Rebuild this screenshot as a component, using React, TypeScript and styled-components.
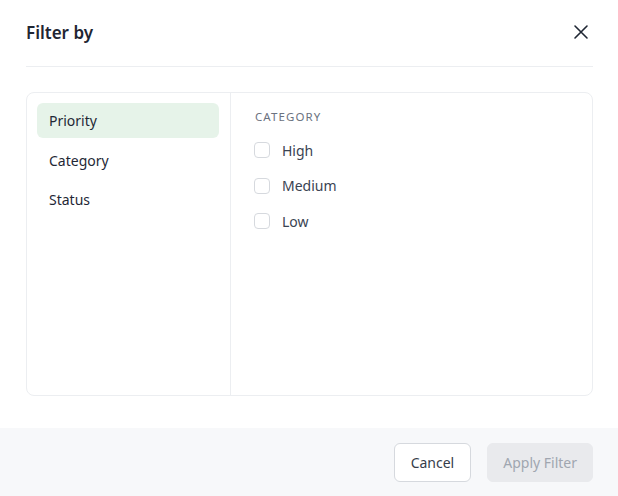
import React, { FC, useState } from 'react';
import styled, { createGlobalStyle } from 'styled-components';

const GlobalStyle = createGlobalStyle`
  html, body {
    margin: 0;
    padding: 0;
    background: #ffffff;
  }
  body {
    font-family: 'Noto Sans', 'Open Sans', sans-serif;
    color: #1f2633;
  }
`;

const Dialog = styled.div`
  width: 618px;
  height: 496px;
  display: flex;
  flex-direction: column;
  background: #ffffff;
`;

const Header = styled.div`
  margin: 0 25px 0 26px;
  height: 66px;
  display: flex;
  align-items: center;
  justify-content: space-between;
  border-bottom: 1px solid #eceef1;
`;

const Title = styled.h2`
  margin: 0 0 2px;
  font-size: 17px;
  font-weight: 600;
  color: #1f2633;
`;

const CloseButton = styled.button`
  border: none;
  background: none;
  padding: 0;
  width: 20px;
  height: 20px;
  display: flex;
  align-items: center;
  justify-content: center;
  cursor: pointer;
  margin: 0 2px 2px 0;
`;

const Body = styled.div`
  flex: 1;
  padding: 25px 25px 32px 26px;
  display: flex;
`;

const Panel = styled.div`
  flex: 1;
  display: flex;
  border: 1px solid #eceef1;
  border-radius: 8px;
`;

const Sidebar = styled.div`
  width: 182px;
  padding: 10px 11px 10px 10px;
  border-right: 1px solid #eceef1;
  display: flex;
  flex-direction: column;
  gap: 4.5px;
`;

const SideItem = styled.div<{ active?: boolean }>`
  height: 35px;
  display: flex;
  align-items: center;
  padding-left: 12px;
  border-radius: 6px;
  font-size: 14px;
  color: #1f2836;
  background: ${({ active }) => (active ? '#e6f3e9' : 'transparent')};
  cursor: pointer;
`;

const Content = styled.div`
  flex: 1;
  padding: 16px 24px;
`;

const SectionLabel = styled.div`
  font-size: 11.5px;
  letter-spacing: 1.1px;
  color: #6b7280;
  text-transform: uppercase;
  line-height: 16px;
  margin-bottom: 13px;
`;

const OptionList = styled.div`
  display: flex;
  flex-direction: column;
  gap: 11.5px;
`;

const Option = styled.label`
  display: flex;
  align-items: center;
  gap: 12px;
  height: 24px;
  font-size: 14px;
  color: #3a4352;
  cursor: pointer;
`;

const Box = styled.span<{ checked?: boolean }>`
  width: 14px;
  height: 14px;
  border: 1px solid #d6d9de;
  border-radius: 4px;
  margin-left: -1px;
  background: ${({ checked }) => (checked ? '#2f7d4a' : '#fff')};
`;

const Footer = styled.div`
  height: 68px;
  background: #f7f8fa;
  display: flex;
  align-items: center;
  justify-content: flex-end;
  gap: 16px;
  padding: 0 25px;
`;

const Button = styled.button<{ variant?: 'primary' | 'secondary' }>`
  height: 39px;
  border-radius: 6px;
  font-family: inherit;
  font-size: 14px;
  padding: 0 ${({ variant }) => (variant === 'primary' ? '15px' : '16px')};
  border: 1px solid ${({ variant }) => (variant === 'primary' ? '#e9eaed' : '#d6d9de')};
  background: ${({ variant }) => (variant === 'primary' ? '#e9eaed' : '#ffffff')};
  color: ${({ variant }) => (variant === 'primary' ? '#a0a6b0' : '#353d4a')};
`;

const sections = ['Priority', 'Category', 'Status'];
const options = ['High', 'Medium', 'Low'];

const App: FC = () => {
  const [active, setActive] = useState('Priority');
  const [checked, setChecked] = useState<Record<string, boolean>>({});

  return (
    <Dialog>
      <GlobalStyle />
      <Header>
        <Title>Filter by</Title>
        <CloseButton aria-label="Close">
          <svg width="16" height="16" viewBox="0 0 16 16" fill="none">
            <path d="M2 2L14 14M14 2L2 14" stroke="#1f2633" strokeWidth="1.6" strokeLinecap="round" />
          </svg>
        </CloseButton>
      </Header>
      <Body>
        <Panel>
          <Sidebar>
            {sections.map((s) => (
              <SideItem key={s} active={s === active} onClick={() => setActive(s)}>
                {s}
              </SideItem>
            ))}
          </Sidebar>
          <Content>
            <SectionLabel>Category</SectionLabel>
            <OptionList>
              {options.map((o) => (
                <Option key={o} onClick={() => setChecked({ ...checked, [o]: !checked[o] })}>
                  <Box checked={checked[o]} />
                  {o}
                </Option>
              ))}
            </OptionList>
          </Content>
        </Panel>
      </Body>
      <Footer>
        <Button variant="secondary">Cancel</Button>
        <Button variant="primary" disabled>
          Apply Filter
        </Button>
      </Footer>
    </Dialog>
  );
};

export default App;
